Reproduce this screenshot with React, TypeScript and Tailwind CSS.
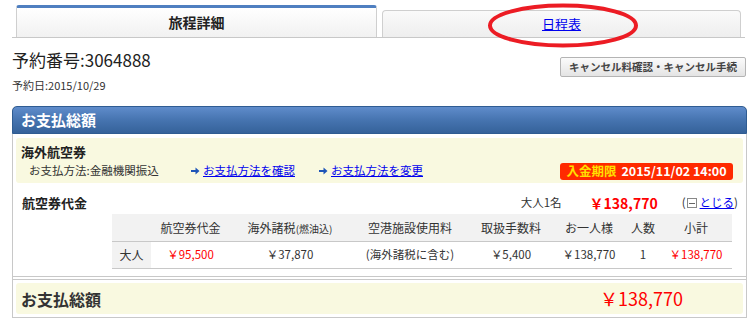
import React from 'react';

const font = { fontFamily: '"Noto Sans CJK JP", "Noto Sans", sans-serif' };

interface Col {
  label: React.ReactNode;
  value: string;
  w: string;
  red?: boolean;
}

const cols: Col[] = [
  { label: '航空券代金', value: '￥95,500', w: 'w-[79px]', red: true },
  { label: <>海外諸税<span className="text-[10px]">(燃油込)</span></>, value: '￥37,870', w: 'w-[120px]' },
  { label: '空港施設使用料', value: '(海外諸税に含む)', w: 'w-[120px]' },
  { label: '取扱手数料', value: '￥5,400', w: 'w-[82px]' },
  { label: 'お一人様', value: '￥138,770', w: 'w-[74px]' },
  { label: '人数', value: '1', w: 'w-[34px]' },
  { label: '小計', value: '￥138,770', w: 'w-[72px]', red: true },
];

const Arrow = () => (
  <svg width="9" height="8" viewBox="0 0 9 8" className="mr-[3px] shrink-0">
    <path d="M0 3h4.5V0.5L8.5 4 4.5 7.5V5H0z" fill="#1f55b8" />
  </svg>
);

export default function App() {
  return (
    <div className="relative w-[755px] h-[326px] overflow-hidden bg-white text-[#333] text-[11.5px]" style={font}>
      {/* Tabs */}
      <div className="ml-[12px] w-[733px] pt-[5px] pl-[4px] flex items-end gap-[5px] border-b border-[#c8c8c8]">
        <div className="w-[361px] h-[32px] border-t-[3px] border-t-[#4f7fc0] border-x border-[#cfcfcf] rounded-t-[3px] bg-gradient-to-b from-white to-[#f1f1f1] flex items-center justify-center">
          <span className="text-[14px] font-bold text-[#222]">旅程詳細</span>
        </div>
        <div className="w-[359px] h-[27px] border-x border-t border-[#cfcfcf] rounded-t-[4px] bg-gradient-to-b from-[#fafafa] to-[#eeeeee] flex items-center justify-center">
          <span className="text-[13px] text-[#0000ee] underline">日程表</span>
        </div>
      </div>

      {/* Red annotation */}
      <svg className="absolute left-[487px] top-[3px]" width="152" height="45" viewBox="0 0 152 45">
        <ellipse cx="76" cy="22.5" rx="73" ry="20" fill="none" stroke="#ec1c24" strokeWidth="4" />
      </svg>

      {/* Reservation */}
      <div className="px-[12px] flex justify-between">
        <div>
          <div className="mt-[12px] text-[17px] leading-[20px] text-[#222]">予約番号:3064888</div>
          <div className="mt-[8px] text-[11px] leading-[14px]">予約日:2015/10/29</div>
        </div>
        <button className="mt-[19px] h-[20px] w-[186px] mr-[-3px] border border-[#b4b4b4] rounded-[2px] bg-gradient-to-b from-[#fbfbfb] to-[#e4e4e4] text-[10.5px] font-bold text-[#444] leading-none">
          キャンセル料確認・キャンセル手続
        </button>
      </div>

      {/* Panel */}
      <div className="ml-[12px] mt-[14px] w-[735px] border-x border-b border-[#c8c8c8] rounded-t-[5px]">
        <div className="h-[28px] rounded-t-[5px] border border-[#2f5c92] bg-gradient-to-b from-[#5f8ccb] via-[#4674b0] to-[#35629a] flex items-center px-[8px] -mx-px">
          <span className="text-[15px] font-bold text-white">お支払総額</span>
        </div>

        <div className="border-b border-[#c8c8c8] pb-[7px]">
          <div className="mx-[3px] mt-[4px] h-[45px] bg-[#f9f9e0] rounded-[3px] px-[5px] pt-[6px]">
            <div className="font-bold text-[13px] leading-[16px] text-[#222]">海外航空券</div>
            <div className="mt-[2px] flex items-center h-[18px]">
              <span className="ml-[8px] w-[162px]">お支払方法:金融機関振込</span>
              <Arrow />
              <span className="text-[#0000ee] underline w-[116px]">お支払方法を確認</span>
              <Arrow />
              <span className="text-[#0000ee] underline">お支払方法を変更</span>
              <span className="ml-auto mr-[5px] h-[17px] w-[173px] justify-center rounded-[3px] bg-[#ff2a00] flex items-center font-bold text-[12.5px]">
                <span className="text-[#ffe100]">入金期限</span>
                <span className="ml-[5px] text-white">2015/11/02 14:00</span>
              </span>
            </div>
          </div>

          <div className="mt-[10px] h-[20px] flex items-center pl-[9px] pr-[8px]">
            <span className="font-bold text-[13px] text-[#222]">航空券代金</span>
            <span className="ml-auto">大人1名</span>
            <span className="ml-[28px] text-[14px] font-bold text-[#ff0000]">￥138,770</span>
            <span className="ml-[24px] flex items-center">
              (
              <span className="mx-[1px] w-[10px] h-[10px] border border-[#888] flex items-center justify-center">
                <span className="w-[6px] h-px bg-[#666]" />
              </span>
              <span className="ml-[2px] text-[#0000ee] underline">とじる</span>)
            </span>
          </div>

          <div className="ml-[99px] w-[620px] mt-[1px]">
            <div className="h-[28px] bg-[#f2f2f2] border-b border-[#c8c8c8] flex items-center">
              <div className="w-[39px]" />
              {cols.map((c, i) => (
                <div key={i} className={`${c.w} text-center text-[12px] text-[#333]`}>{c.label}</div>
              ))}
            </div>
            <div className="h-[27px] border-b border-[#c8c8c8] flex items-stretch">
              <div className="w-[39px] bg-[#f2f2f2] flex items-center justify-center text-[12px]">大人</div>
              {cols.map((c, i) => (
                <div key={i} className={`${c.w} flex items-center justify-center ${c.red ? 'text-[#ff0000]' : ''}`}>{c.value}</div>
              ))}
            </div>
          </div>
        </div>

        <div className="mt-[2px] border-t border-[#c8c8c8] pb-[3px]">
          <div className="mx-[3px] mt-[3px] h-[31px] bg-[#f9f9e0] rounded-[3px] flex items-center pl-[5px]">
            <span className="text-[16px] font-bold text-[#333]">お支払総額</span>
            <span className="ml-auto mr-[60px] text-[18px] text-[#ff0000]">￥138,770</span>
          </div>
        </div>
      </div>
    </div>
  );
}
